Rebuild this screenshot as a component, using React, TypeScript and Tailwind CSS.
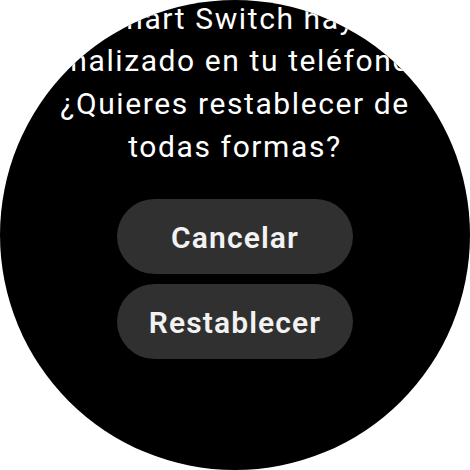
export default function App() {
  return (
    <div className="w-[470px] h-[470px] bg-white">
      <div className="w-[470px] h-[470px] rounded-full bg-black overflow-hidden flex flex-col items-center">
        <div
          className="mt-[-2.5px] text-white text-[30px] leading-[42.7px] tracking-[1.6px] text-center w-full"
          style={{ fontFamily: "Roboto, 'Liberation Sans', sans-serif" }}
        >
          <div className="whitespace-nowrap">Smart Switch haya</div>
          <div className="whitespace-nowrap">finalizado en tu teléfono.</div>
          <div className="whitespace-nowrap">¿Quieres restablecer de</div>
          <div className="whitespace-nowrap">todas formas?</div>
        </div>
        <div
          className="mt-[31px] flex flex-col items-center gap-[10px]"
          style={{ fontFamily: "Roboto, 'Liberation Sans', sans-serif" }}
        >
          <button className="w-[236px] h-[75px] rounded-full bg-[#303030] text-[#f2f2f2] text-[30px] tracking-[1.1px] font-semibold flex items-center justify-center pt-[2px]">
            Cancelar
          </button>
          <button className="w-[236px] h-[75px] rounded-full bg-[#303030] text-[#f2f2f2] text-[30px] tracking-[1.1px] font-semibold flex items-center justify-center pt-[2px]">
            Restablecer
          </button>
        </div>
      </div>
    </div>
  );
}
